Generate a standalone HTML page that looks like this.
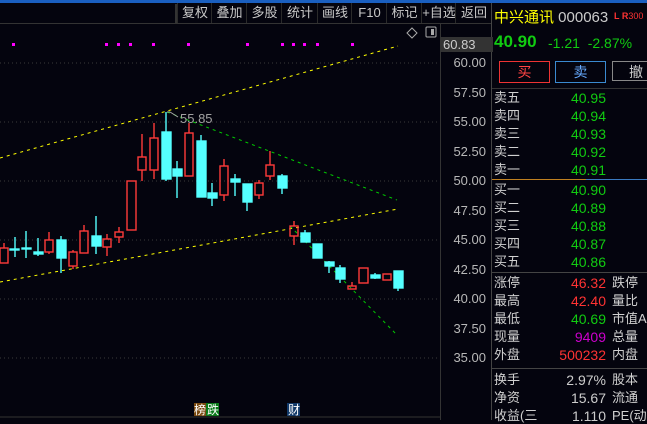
<!DOCTYPE html><html><head><meta charset="utf-8"><style>
body{margin:0;width:647px;height:420px;background:#04040e;overflow:hidden;position:relative;font-family:"Liberation Sans","Noto Sans CJK SC",sans-serif;}
.a{position:absolute;white-space:nowrap}
.tb{position:absolute;top:3px;height:20px;font-size:13px;color:#c8c8c8;line-height:20px;text-align:center;border-left:1px solid #2a2a2a}
.l{position:absolute;left:494px;font-size:13px;color:#d0d0d0;line-height:16px}
.v{position:absolute;right:41px;font-size:14px;line-height:16px;text-align:right}
.t{position:absolute;left:612px;font-size:13px;color:#d0d0d0;line-height:16px}
.ax{position:absolute;left:446px;width:40px;text-align:right;font-size:13px;color:#b8b8b8}
</style></head><body>
<div class="a" style="left:0;top:0;width:647px;height:3px;background:#1a5fc0"></div>
<div class="a" style="left:0;top:23px;width:491px;height:1px;background:#333"></div>
<div class="a" style="left:175px;top:4px;width:2px;height:19px;background:#333"></div>
<div class="tb" style="left:177px;width:34px">复权</div>
<div class="tb" style="left:211px;width:35px">叠加</div>
<div class="tb" style="left:246px;width:35px">多股</div>
<div class="tb" style="left:281px;width:36px">统计</div>
<div class="tb" style="left:317px;width:34px">画线</div>
<div class="tb" style="left:351px;width:35px">F10</div>
<div class="tb" style="left:386px;width:35px">标记</div>
<div class="tb" style="left:421px;width:34px">+自选</div>
<div class="tb" style="left:455px;width:36px">返回</div>
<div class="a" style="left:440px;top:24px;width:1px;height:396px;background:#333"></div>
<div class="a" style="left:491px;top:3px;width:1px;height:417px;background:#444"></div>
<svg class="a" style="left:0;top:0" width="440" height="420">
<g stroke="#3a3a3a" stroke-dasharray="1 3"><line x1="0" y1="63" x2="440" y2="63"/><line x1="0" y1="122" x2="440" y2="122"/><line x1="0" y1="181" x2="440" y2="181"/><line x1="0" y1="240" x2="440" y2="240"/><line x1="0" y1="299" x2="440" y2="299"/><line x1="0" y1="358" x2="440" y2="358"/></g>
<line x1="0" y1="417" x2="440" y2="417" stroke="#333"/>
<g fill="#f0f"><rect x="12" y="43" width="3" height="3"/><rect x="105" y="43" width="3" height="3"/><rect x="117" y="43" width="3" height="3"/><rect x="129" y="43" width="3" height="3"/><rect x="152" y="43" width="3" height="3"/><rect x="187" y="43" width="3" height="3"/><rect x="246" y="43" width="3" height="3"/><rect x="281" y="43" width="3" height="3"/><rect x="292" y="43" width="3" height="3"/><rect x="303" y="43" width="3" height="3"/><rect x="316" y="43" width="3" height="3"/><rect x="351" y="43" width="3" height="3"/></g>
<path d="M407 33l5-5 5 5-5 5z" fill="none" stroke="#aaa"/><rect x="426" y="27" width="10" height="10" fill="none" stroke="#aaa" rx="1"/><rect x="431" y="29" width="3" height="6" fill="#aaa"/>
<g stroke-dasharray="3 4" fill="none"><line x1="0" y1="158" x2="398" y2="46" stroke="#ff0"/><line x1="0" y1="282" x2="398" y2="209" stroke="#ff0"/><line x1="167" y1="112" x2="397" y2="200" stroke="#0c0"/><line x1="290" y1="226" x2="397" y2="335" stroke="#0c0"/></g>
<path d="M167 112h3m0 0l8 5" stroke="#aaa" fill="none"/>
<text x="180" y="123" fill="#a0a0a0" font-size="13" font-family="Liberation Sans">55.85</text>
<g id="c" stroke-width="1.4">
<path d="M4 243v20M15 237v20M26 231v27M38 238v18M49 232v22M61 236v37M73 250v18M84 225v30M96 216v38M107 234v22M119 227v15M131 180v51M142 134v47M154 123v56M166 112v69M177 161v37M189 123v53M201 135v62M212 183v23M224 159v42M235 174v22M247 184v27M259 180v20M270 151v29M282 174v20M294 221v24M305 230v12M317 244v14M329 261v12M340 265v18M352 282v7M363 268v15M375 273v6M387 274v6M398 271v20" stroke="#ddd" stroke-opacity="0"/>
</g>
<g stroke="#ff3a3a" fill="none" stroke-width="1.4">
<rect x="0" y="248" width="8" height="15"/><line x1="4" y1="243" x2="4" y2="248"/>
<rect x="45" y="240" width="8" height="12"/><line x1="49" y1="232" x2="49" y2="240"/><line x1="49" y1="252" x2="49" y2="254"/>
<rect x="69" y="252" width="8" height="14"/><line x1="73" y1="250" x2="73" y2="252"/><line x1="73" y1="266" x2="73" y2="269"/>
<rect x="80" y="231" width="8" height="22"/><line x1="84" y1="225" x2="84" y2="231"/>
<rect x="103" y="239" width="8" height="8"/><line x1="107" y1="234" x2="107" y2="239"/><line x1="107" y1="247" x2="107" y2="256"/>
<rect x="115" y="232" width="8" height="5"/><line x1="119" y1="227" x2="119" y2="232"/><line x1="119" y1="237" x2="119" y2="243"/>
<rect x="127" y="181" width="9" height="49"/>
<rect x="138" y="157" width="8" height="13"/><line x1="142" y1="134" x2="142" y2="157"/><line x1="142" y1="170" x2="142" y2="181"/>
<rect x="150" y="138" width="8" height="32"/><line x1="154" y1="123" x2="154" y2="138"/><line x1="154" y1="170" x2="154" y2="179"/>
<rect x="185" y="133" width="8" height="43"/><line x1="189" y1="123" x2="189" y2="133"/>
<rect x="220" y="166" width="8" height="29"/><line x1="224" y1="159" x2="224" y2="166"/><line x1="224" y1="195" x2="224" y2="201"/>
<rect x="255" y="183" width="8" height="12"/><line x1="259" y1="180" x2="259" y2="183"/><line x1="259" y1="195" x2="259" y2="199"/>
<rect x="266" y="165" width="8" height="11"/><line x1="270" y1="151" x2="270" y2="165"/><line x1="270" y1="176" x2="270" y2="180"/>
<rect x="290" y="226" width="8" height="10"/><line x1="294" y1="221" x2="294" y2="226"/><line x1="294" y1="236" x2="294" y2="245"/>
<rect x="348" y="286" width="8" height="3"/><line x1="352" y1="282" x2="352" y2="286"/>
<rect x="359" y="268" width="9" height="15"/>
<rect x="383" y="274" width="8" height="6"/>
</g>
<g fill="#5ff" stroke="#5ff" stroke-width="1.4">
<line x1="15" y1="237" x2="15" y2="257"/><rect x="10" y="249" width="9" height="1"/>
<line x1="26" y1="231" x2="26" y2="258"/><rect x="22" y="248" width="9" height="1"/>
<line x1="38" y1="238" x2="38" y2="256"/><rect x="34" y="252" width="9" height="2"/>
<line x1="61" y1="236" x2="61" y2="273"/><rect x="57" y="240" width="9" height="18"/>
<line x1="96" y1="216" x2="96" y2="254"/><rect x="92" y="236" width="9" height="10"/>
<line x1="166" y1="112" x2="166" y2="181"/><rect x="162" y="132" width="9" height="47"/>
<line x1="177" y1="161" x2="177" y2="198"/><rect x="173" y="169" width="9" height="7"/>
<line x1="201" y1="135" x2="201" y2="197"/><rect x="197" y="141" width="9" height="56"/>
<line x1="212" y1="183" x2="212" y2="206"/><rect x="208" y="193" width="9" height="5"/>
<line x1="235" y1="174" x2="235" y2="196"/><rect x="231" y="179" width="9" height="3"/>
<line x1="247" y1="184" x2="247" y2="211"/><rect x="243" y="184" width="9" height="18"/>
<line x1="282" y1="174" x2="282" y2="194"/><rect x="278" y="176" width="9" height="12"/>
<line x1="305" y1="230" x2="305" y2="242"/><rect x="301" y="233" width="9" height="9"/>
<rect x="313" y="244" width="9" height="14"/>
<line x1="329" y1="261" x2="329" y2="273"/><rect x="325" y="262" width="9" height="4"/>
<line x1="340" y1="265" x2="340" y2="283"/><rect x="336" y="268" width="9" height="11"/>
<line x1="375" y1="273" x2="375" y2="279"/><rect x="371" y="275" width="9" height="3"/>
<line x1="398" y1="271" x2="398" y2="291"/><rect x="394" y="271" width="9" height="17"/>
</g>
<rect x="194" y="403" width="12" height="13" fill="#7a4a10"/><rect x="206" y="403" width="13" height="13" fill="#0a7a1a"/><rect x="287" y="403" width="13" height="13" fill="#123a6a"/>
<text x="194" y="414" fill="#fff" font-size="12" font-family="Noto Sans CJK SC">榜</text><text x="207" y="414" fill="#fff" font-size="12" font-family="Noto Sans CJK SC">跌</text><text x="288" y="414" fill="#fff" font-size="12" font-family="Noto Sans CJK SC">财</text>
</svg>
<div class="a" style="left:441px;top:37px;width:50px;height:15px;background:#333;color:#ccc;font-size:13px;line-height:15px;padding-left:2px">60.83</div>
<div class="ax" style="top:55px">60.00</div><div class="ax" style="top:85px">57.50</div><div class="ax" style="top:114px">55.00</div><div class="ax" style="top:144px">52.50</div><div class="ax" style="top:173px">50.00</div><div class="ax" style="top:203px">47.50</div><div class="ax" style="top:232px">45.00</div><div class="ax" style="top:262px">42.50</div><div class="ax" style="top:291px">40.00</div><div class="ax" style="top:321px">37.50</div><div class="ax" style="top:350px">35.00</div>
<div class="a" style="left:494px;top:8px;font-size:15px;color:#ff0;line-height:20px">中兴通讯 <span style="color:#ccc">000063</span></div>
<div class="a" style="left:614px;top:11px;font-size:9px;color:#f33;font-weight:bold">L R<span style="font-weight:normal">300</span></div>
<div class="a" style="left:494px;top:32px;font-size:17px;color:#1c1;font-weight:bold;line-height:20px">40.90</div>
<div class="a" style="left:548px;top:33px;font-size:14px;color:#1c1;line-height:20px">-1.21 &nbsp;-2.87%</div>
<div class="a" style="left:499px;top:61px;width:49px;height:20px;border:1px solid #e33;color:#f44;font-size:14px;text-align:center;line-height:20px">买</div>
<div class="a" style="left:555px;top:61px;width:49px;height:20px;border:1px solid #3a8ad0;color:#6af;font-size:14px;text-align:center;line-height:20px">卖</div>
<div class="a" style="left:612px;top:61px;width:49px;height:20px;border:1px solid #888;color:#ccc;font-size:14px;line-height:20px;padding-left:16px;box-sizing:border-box;width:40px">撤</div>
<div class="a" style="left:492px;top:88px;width:155px;height:1px;background:#333"></div>
<div class="a" style="left:492px;top:179px;width:94px;height:1px;background:#c08020"></div>
<div class="a" style="left:586px;top:179px;width:61px;height:1px;background:#3a7ac0"></div>
<div class="a" style="left:492px;top:272px;width:155px;height:1px;background:#444"></div>
<div class="a" style="left:492px;top:368px;width:155px;height:1px;background:#444"></div>
<div class="l" style="top:90px">卖五</div><div class="v" style="top:90px;color:#1c1">40.95</div>
<div class="l" style="top:108px">卖四</div><div class="v" style="top:108px;color:#1c1">40.94</div>
<div class="l" style="top:126px">卖三</div><div class="v" style="top:126px;color:#1c1">40.93</div>
<div class="l" style="top:144px">卖二</div><div class="v" style="top:144px;color:#1c1">40.92</div>
<div class="l" style="top:162px">卖一</div><div class="v" style="top:162px;color:#1c1">40.91</div>
<div class="l" style="top:182px">买一</div><div class="v" style="top:182px;color:#1c1">40.90</div>
<div class="l" style="top:200px">买二</div><div class="v" style="top:200px;color:#1c1">40.89</div>
<div class="l" style="top:218px">买三</div><div class="v" style="top:218px;color:#1c1">40.88</div>
<div class="l" style="top:236px">买四</div><div class="v" style="top:236px;color:#1c1">40.87</div>
<div class="l" style="top:254px">买五</div><div class="v" style="top:254px;color:#1c1">40.86</div>
<div class="l" style="top:275px">涨停</div><div class="v" style="top:275px;color:#f33">46.32</div><div class="t" style="top:275px">跌停</div>
<div class="l" style="top:293px">最高</div><div class="v" style="top:293px;color:#f33">42.40</div><div class="t" style="top:293px">量比</div>
<div class="l" style="top:311px">最低</div><div class="v" style="top:311px;color:#1c1">40.69</div><div class="t" style="top:311px">市值A</div>
<div class="l" style="top:329px">现量</div><div class="v" style="top:329px;color:#c0c">9409</div><div class="t" style="top:329px">总量</div>
<div class="l" style="top:347px">外盘</div><div class="v" style="top:347px;color:#f33">500232</div><div class="t" style="top:347px">内盘</div>
<div class="l" style="top:372px">换手</div><div class="v" style="top:372px;color:#ccc">2.97%</div><div class="t" style="top:372px">股本</div>
<div class="l" style="top:390px">净资</div><div class="v" style="top:390px;color:#ccc">15.67</div><div class="t" style="top:390px">流通</div>
<div class="l" style="top:408px">收益(三</div><div class="v" style="top:408px;color:#ccc">1.110</div><div class="t" style="top:408px">PE(动</div>
</body></html>
